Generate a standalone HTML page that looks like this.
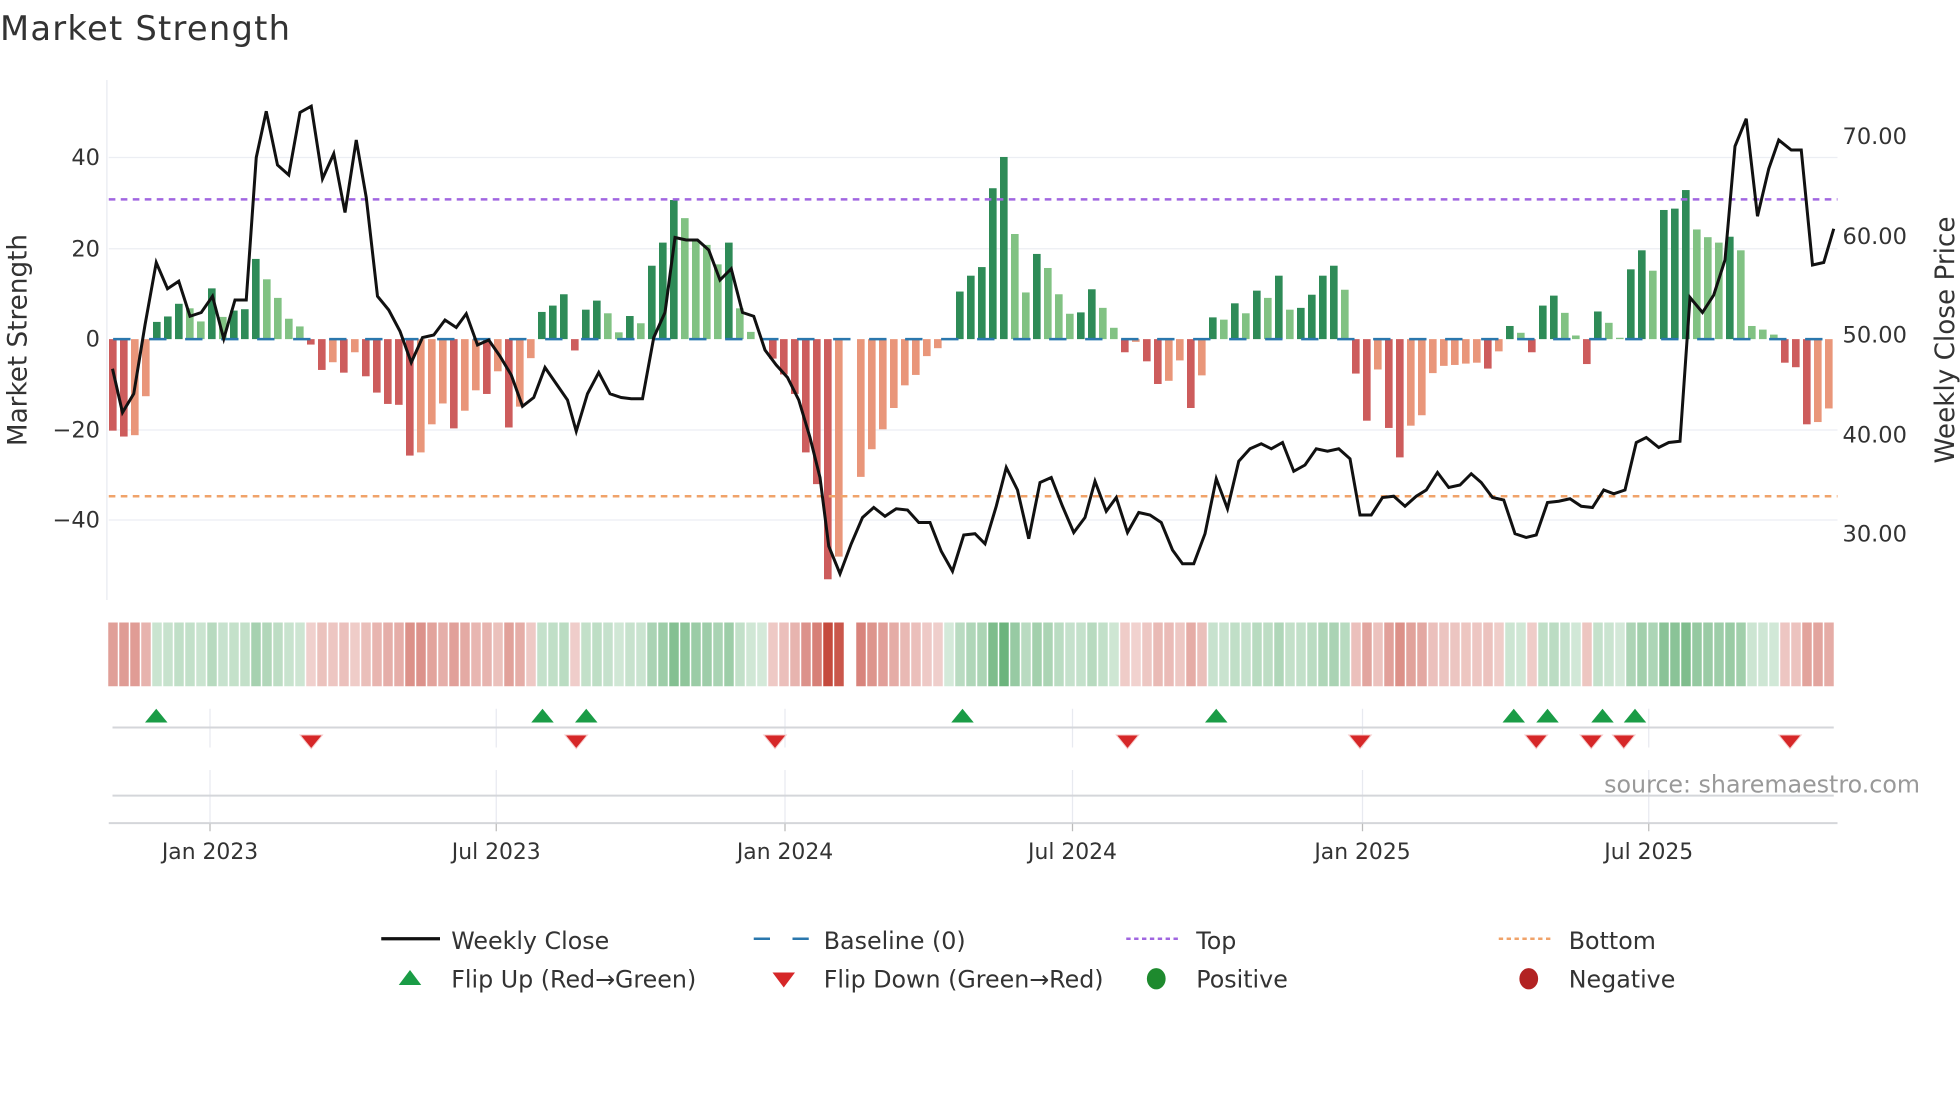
<!DOCTYPE html>
<html><head><meta charset="utf-8"><style>
html,body{margin:0;padding:0;background:#fff;width:1960px;height:1102px;overflow:hidden}
svg{display:block}
text{font-family:"DejaVu Sans","Liberation Sans",sans-serif;fill:#2a3f5f}
</style></head><body>
<svg id="s" width="1960" height="1102" viewBox="0 0 1568 881.6" xmlns="http://www.w3.org/2000/svg">
<rect width="1568" height="882" fill="#fff"/>
<text x="0" y="32" font-size="27" fill="#333" style="fill:#333" textLength="232">Market Strength</text>
<g stroke="#eceef3" stroke-width="1">
<line x1="87" y1="126" x2="1470" y2="126"/><line x1="87" y1="199" x2="1470" y2="199"/>
<line x1="87" y1="344" x2="1470" y2="344"/><line x1="87" y1="416" x2="1470" y2="416"/>
</g>
<line x1="85.5" y1="64" x2="85.5" y2="480" stroke="#eceef3" stroke-width="1.2"/>
<g font-size="18" text-anchor="end" style="fill:#333">
<text x="80" y="132" style="fill:#333">40</text><text x="80" y="205" style="fill:#333">20</text>
<text x="80" y="277" style="fill:#333">0</text><text x="80" y="350" style="fill:#333">−20</text>
<text x="80" y="422" style="fill:#333">−40</text></g>
<g font-size="18" style="fill:#333">
<text x="1474" y="115" style="fill:#333">70.00</text><text x="1474" y="195" style="fill:#333">60.00</text>
<text x="1474" y="274" style="fill:#333">50.00</text><text x="1474" y="354" style="fill:#333">40.00</text>
<text x="1474" y="433" style="fill:#333">30.00</text></g>
<text transform="translate(21,272) rotate(-90)" text-anchor="middle" font-size="21" style="fill:#333">Market Strength</text>
<text transform="translate(1563,272) rotate(-90)" text-anchor="middle" font-size="21" style="fill:#333">Weekly Close Price</text>
<g id="bars"></g>
<line x1="90.5" y1="271.3" x2="1470" y2="271.3" stroke="#2a77ad" stroke-width="2" stroke-dasharray="13.9 14.9"/>
<line x1="87" y1="159.5" x2="1470" y2="159.5" stroke="#a066e0" stroke-width="2" stroke-dasharray="5.3 4.3"/>
<line x1="87" y1="397" x2="1470" y2="397" stroke="#f0a36a" stroke-width="2" stroke-dasharray="5.3 4.3"/>
<polyline fill="none" stroke="#111" stroke-width="2.4" stroke-linejoin="miter" points="90,295 98,330 107,315 116,260 125,210 134,231 143,225 152,253 161,250 170,237 179,271 188,240 197,240 205,126 213,89 222,132 231,140 240,90 249,85 258,143 267,123 276,170 285,112 293,158 302,237 311,248 320,265 329,290 338,270 347,268 356,256 365,262 373,251 382,276 391,272 400,285 409,300 418,325 427,318 436,294 445,307 454,320 461,345 470,315 479,298 488,315 497,318 505,319 514,319 523,270 532,250 540,190 549,192 558,192 567,200 576,224 585,215 594,250 603,253 612,280 621,292 630,302 639,320 648,350 656,382 663,437 672,459 681,435 690,414 699,406 708,413 717,407 726,408 735,418 744,418 753,441 762,457 771,428 780,427 788,435 797,405 805,374 814,392 823,431 832,386 841,382 850,405 859,426 868,414 876,385 885,409 893,398 902,426 911,410 920,412 929,418 938,440 946,451 955,451 964,427 973,383 982,407 991,369 1000,359 1009,355 1017,359 1026,354 1035,377 1044,372 1053,359 1062,361 1071,359 1080,367 1088,412 1097,412 1106,398 1115,397 1124,405 1133,397 1141,392 1150,378 1159,390 1168,388 1177,379 1185,386 1194,398 1203,400 1212,427 1221,430 1229,428 1238,402 1247,401 1256,399 1265,405 1274,406 1283,392 1291,395 1300,392 1309,354 1317,350 1327,358 1335,354 1344,353 1352,238 1362,250 1371,236 1380,208 1388,117 1397,95 1406,173 1415,135 1423,112 1433,120 1441,120 1450,212 1459,210 1467,183"/>
<g id="heat"></g>
<g stroke="#e8eaf0" stroke-width="1">
<line x1="168" y1="567" x2="168" y2="598"/><line x1="397" y1="567" x2="397" y2="598"/><line x1="628" y1="567" x2="628" y2="598"/><line x1="858" y1="567" x2="858" y2="598"/><line x1="1090" y1="567" x2="1090" y2="598"/><line x1="1319" y1="567" x2="1319" y2="598"/>
<line x1="168" y1="616" x2="168" y2="658"/><line x1="397" y1="616" x2="397" y2="658"/><line x1="628" y1="616" x2="628" y2="658"/><line x1="858" y1="616" x2="858" y2="658"/><line x1="1090" y1="616" x2="1090" y2="658"/><line x1="1319" y1="616" x2="1319" y2="658"/>
</g>
<line x1="90" y1="582" x2="1467" y2="582" stroke="#d4d6da" stroke-width="1.6"/>
<line x1="90" y1="636.5" x2="1467" y2="636.5" stroke="#d4d6da" stroke-width="1.6"/>
<line x1="87" y1="658.5" x2="1470" y2="658.5" stroke="#d4d6da" stroke-width="1.6"/>
<g stroke="#bbb" stroke-width="1"><line x1="168" y1="659" x2="168" y2="665"/><line x1="397" y1="659" x2="397" y2="665"/><line x1="628" y1="659" x2="628" y2="665"/><line x1="858" y1="659" x2="858" y2="665"/><line x1="1090" y1="659" x2="1090" y2="665"/><line x1="1319" y1="659" x2="1319" y2="665"/></g>
<g id="mk"></g>
<g font-size="17.5" text-anchor="middle" style="fill:#333">
<text x="168" y="687" style="fill:#333">Jan 2023</text><text x="397" y="687" style="fill:#333">Jul 2023</text>
<text x="628" y="687" style="fill:#333">Jan 2024</text><text x="858" y="687" style="fill:#333">Jul 2024</text>
<text x="1090" y="687" style="fill:#333">Jan 2025</text><text x="1319" y="687" style="fill:#333">Jul 2025</text></g>
<text x="1536" y="634" text-anchor="end" font-size="19" style="fill:#999">source: sharemaestro.com</text>
<line x1="305" y1="751" x2="352" y2="751" stroke="#111" stroke-width="2.6"/>
<text x="361" y="759" font-size="19" style="fill:#333">Weekly Close</text>
<line x1="603" y1="751" x2="648" y2="751" stroke="#2a77ad" stroke-width="2" stroke-dasharray="13 18"/>
<text x="659" y="759" font-size="19" style="fill:#333">Baseline (0)</text>
<line x1="901" y1="751" x2="945" y2="751" stroke="#a066e0" stroke-width="2" stroke-dasharray="3.5 2.8"/>
<text x="957" y="759" font-size="19" style="fill:#333">Top</text>
<line x1="1199" y1="751" x2="1243" y2="751" stroke="#f0a36a" stroke-width="2" stroke-dasharray="3.5 2.8"/>
<text x="1255" y="759" font-size="19" style="fill:#333">Bottom</text>
<polygon points="319,788 337,788 328,776" fill="#1a9c46"/>
<text x="361" y="790" font-size="19" style="fill:#333">Flip Up (Red→Green)</text>
<polygon points="618,778 636,778 627,790" fill="#d62728"/>
<text x="659" y="790" font-size="19" style="fill:#333">Flip Down (Green→Red)</text>
<ellipse cx="925" cy="783" rx="7.5" ry="8.5" fill="#1e8a2e"/>
<text x="957" y="790" font-size="19" style="fill:#333">Positive</text>
<ellipse cx="1223" cy="783" rx="7.5" ry="8.5" fill="#b22222"/>
<text x="1255" y="790" font-size="19" style="fill:#333">Negative</text>
</svg>
<script>
var V=[-20.2,-21.5,-21.2,-12.6,3.8,5,7.8,6.8,3.9,11.2,4.9,6.3,6.6,17.7,13.2,9.1,4.5,2.8,-1.2,-6.8,-5.1,-7.4,-2.9,-8.2,-11.8,-14.3,-14.5,-25.7,-25,-18.8,-14.2,-19.7,-15.8,-11.3,-12.1,-7.1,-19.5,-14.9,-4.2,6,7.4,9.9,-2.5,6.5,8.5,5.7,1.5,5.1,3.5,16.2,21.3,30.7,26.7,21.9,20.8,16.5,21.3,6.8,1.6,0,-4.3,-7.8,-12.1,-25,-32,-53,-48,null,-30.4,-24.3,-19.9,-15.2,-10.2,-7.9,-3.75,-2,0,10.5,14,15.9,33.3,40.2,23.2,10.3,18.8,15.7,9.9,5.6,5.9,11,6.9,2.5,-2.9,-0.6,-4.9,-9.9,-9.2,-4.7,-15.2,-8,4.8,4.3,7.9,5.7,10.7,9.1,14,6.5,6.9,9.8,14,16.2,10.9,-7.6,-18,-6.7,-19.6,-26.1,-19.1,-16.8,-7.5,-5.9,-5.7,-5.4,-5.2,-6.5,-2.7,2.9,1.4,-2.9,7.4,9.6,5.8,0.8,-5.5,6.1,3.6,0.3,15.4,19.6,15.1,28.5,28.8,32.9,24.2,22.5,21.3,22.6,19.6,2.9,2.1,1,-5.2,-6.2,-18.8,-18.3,-15.3];
var F="ddll"+"dddlldldddllll"+"ddldldddddllldlldldll"+"ddddddlldldddlllldlll"+"ddddddl"+"x"+"lllllllll"+"dddddlldlllddll"+"dlddlldl"+"dldldldlddddl"+"ddlddllllllld"+"ldldddllddllddldddllldlllldddll";
var NS="http://www.w3.org/2000/svg";
function R(g,x,y,w,h,f,o){var r=document.createElementNS(NS,"rect");r.setAttribute("x",x);r.setAttribute("y",y);r.setAttribute("width",w);r.setAttribute("height",h);r.setAttribute("fill",f);if(o!=null)r.setAttribute("fill-opacity",o);g.appendChild(r);}
var bg=document.getElementById("bars"),hg=document.getElementById("heat");
for(var i=0;i<V.length;i++){var v=V[i];if(v===null)continue;var x=87.2+8.8*i,d=F[i]==="d";
 if(v>0)R(bg,x,271.3-v*3.625,6.1,v*3.625,d?"#2e8b57":"#81c283");
 else if(v<0)R(bg,x,271.3,6.1,-v*3.625,d?"#cd5c5c":"#e9967a");
 var t=Math.min(Math.abs(v)/55,1),o=0.22+0.72*t;
 R(hg,x-0.6,498,7.6,51,v>=0?"#3a9a50":"#c0392b",o);}
var mk=document.getElementById("mk");
[125,434,469,770,973,1211,1238,1282,1308].forEach(function(x){var p=document.createElementNS(NS,"polygon");p.setAttribute("points",(x-9)+",578 "+(x+9)+",578 "+x+",567");p.setAttribute("fill","#1a9c46");mk.appendChild(p);});
[249,461,620,902,1088,1229,1273,1299,1432].forEach(function(x){var p=document.createElementNS(NS,"polygon");p.setAttribute("points",(x-9)+",588 "+(x+9)+",588 "+x+",599");p.setAttribute("fill","#d62728");p.setAttribute("stroke","#f6c9c9");p.setAttribute("stroke-width","0.8");mk.appendChild(p);});
</script>
</body></html>
